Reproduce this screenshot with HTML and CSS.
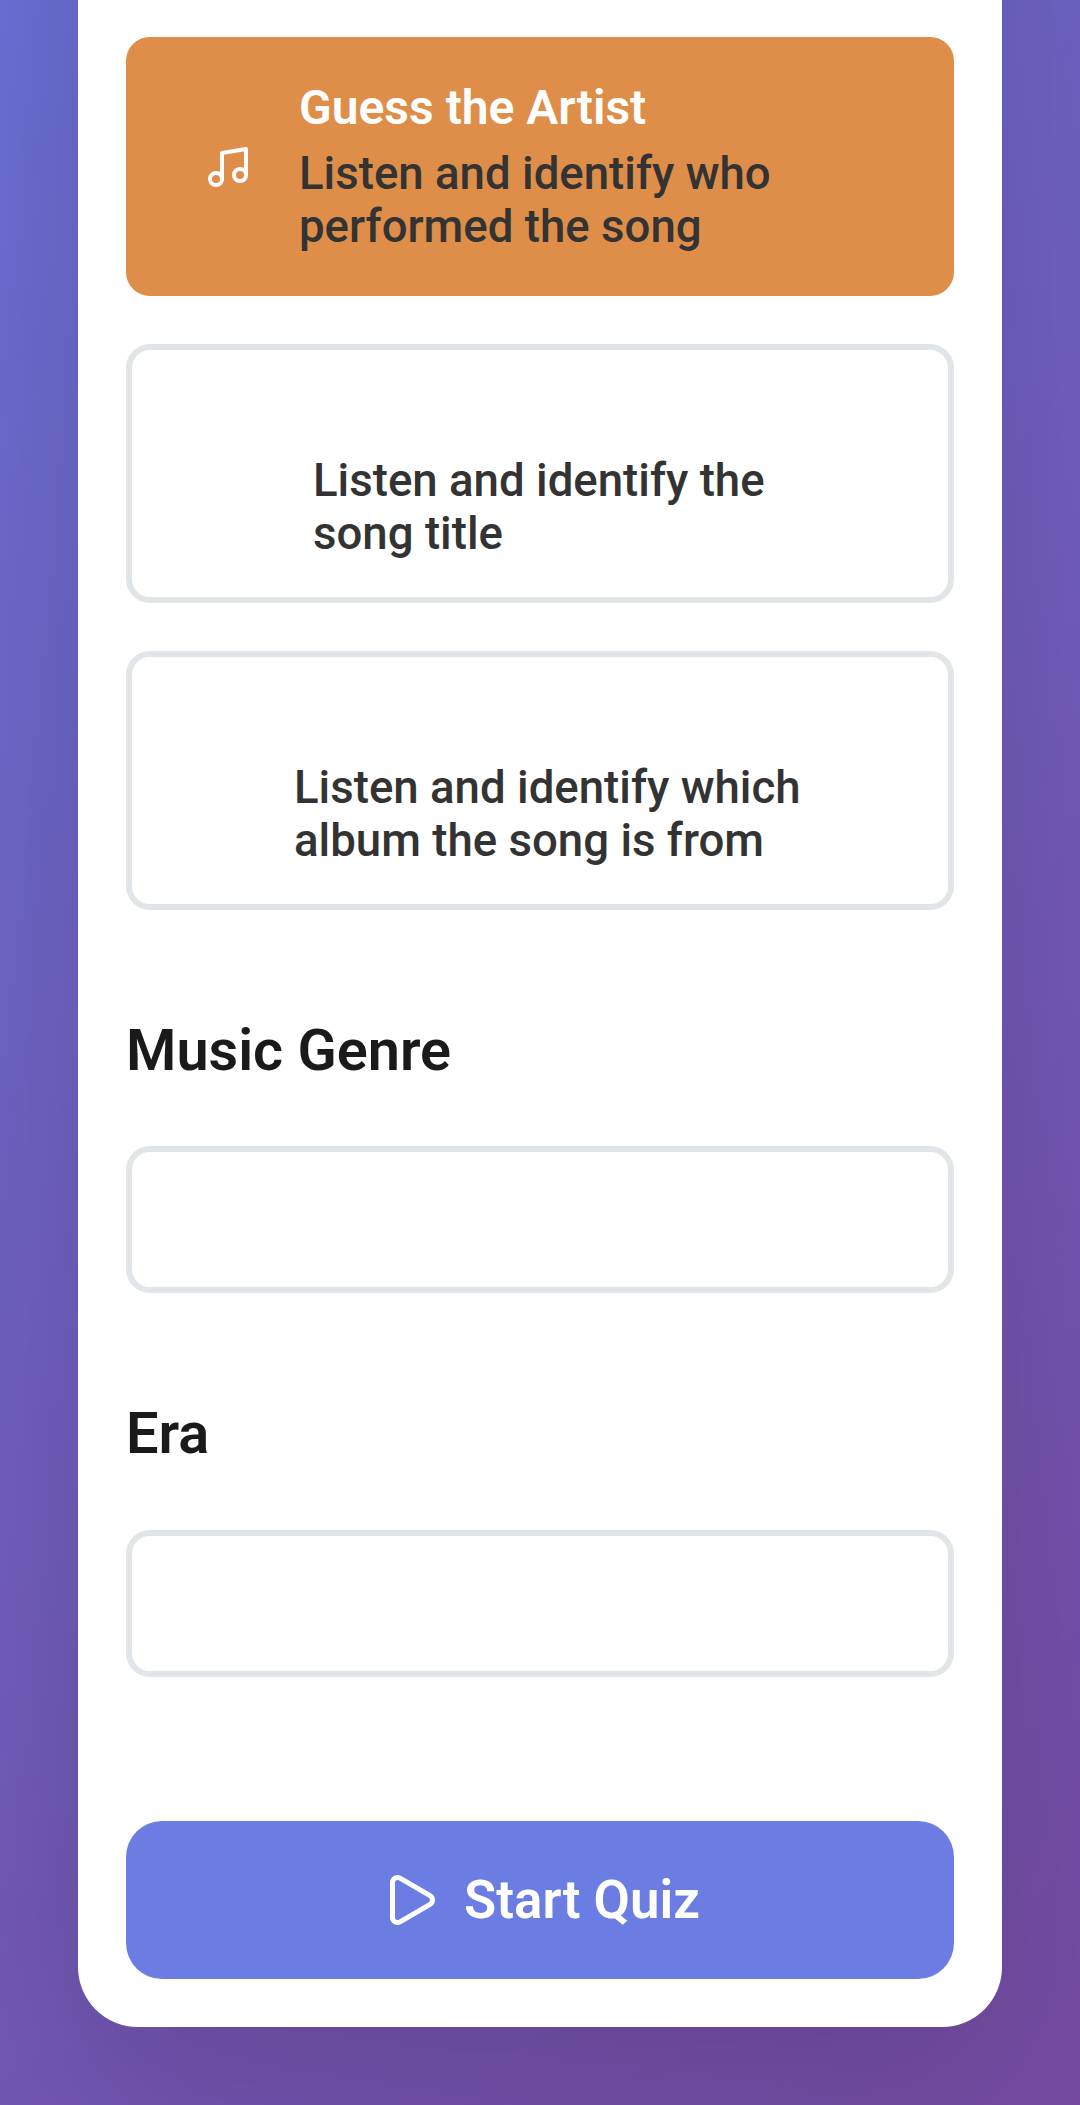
FILE: index.html
```html
<!DOCTYPE html>
<html lang="en">
<head>
<meta charset="utf-8">
<title>Music Quiz</title>
<link rel="stylesheet" href="styles.css">
</head>
<body>
<main class="card">
  <section class="modes">
    <button class="option option-active">
      <svg class="icon-music" viewBox="0 0 24 24"><path d="M9 18V5l12-2v13"/><circle cx="6" cy="18" r="3"/><circle cx="18" cy="16" r="3"/></svg>
      <span class="option-text">
        <span class="option-title">Guess the Artist</span>
        <span class="option-desc">Listen and identify who<br>performed the song</span>
      </span>
    </button>
    <button class="option option-song">
      <span class="option-desc">Listen and identify the<br>song title</span>
    </button>
    <button class="option option-album">
      <span class="option-desc">Listen and identify which<br>album the song is from</span>
    </button>
  </section>
  <section class="group">
    <h2 class="group-title">Music Genre</h2>
    <button class="select" aria-label="Music Genre"></button>
  </section>
  <section class="group">
    <h2 class="group-title">Era</h2>
    <button class="select" aria-label="Era"></button>
  </section>
  <button class="start">
    <svg class="icon-play" viewBox="0 0 24 24"><path d="M5 5a2 2 0 0 1 3.008-1.728l11.997 6.998a2 2 0 0 1 .003 3.458l-12 7A2 2 0 0 1 5 19z"/></svg>
    <span>Start Quiz</span>
  </button>
</main>
</body>
</html>
```
FILE: styles.css
```css
* { box-sizing: border-box; }
body {
  display: flow-root;
  margin: 0;
  height: 2105px;
  padding: 0 78px;
  overflow: hidden;
  font-family: Roboto, sans-serif;
  background: linear-gradient(135deg, #667eea 0%, #764ba2 100%) 0 100% / 100% 3400px no-repeat;
}
button {
  font: inherit;
  text-align: left;
  margin: 0;
  padding: 0;
}
svg {
  flex: none;
  fill: none;
  stroke: #fff;
  stroke-width: 2;
  stroke-linecap: round;
  stroke-linejoin: round;
}
/* The card starts above the visible part of the page. */
.card {
  height: 2927px;
  margin-top: -900px;
  padding: 937px 48px 48px;
  background: #fff;
  border-radius: 60px;
  box-shadow: 0 60px 180px rgba(0, 0, 0, 0.15);
}
.modes {
  display: flex;
  flex-direction: column;
  gap: 48px;
}
.option {
  display: flex;
  height: 259px;
  border: 6px solid #e1e5e8;
  border-radius: 24px;
  background: #fff;
}
.option-active {
  align-items: center;
  gap: 47px;
  padding-left: 72px;
  border-color: #de8e49;
  background: #de8e49;
}
.option-song,
.option-album {
  align-items: flex-end;
  padding-bottom: 37px;
}
.option-song { padding-left: 181px; }
.option-album { padding-left: 162px; }
.icon-music { width: 48px; height: 48px; }
.option-text {
  display: flex;
  flex-direction: column;
  gap: 11px;
}
.option-title {
  font-size: 48px;
  line-height: 56px;
  font-weight: 600;
  color: #fff;
}
.option-desc {
  font-size: 45.6px;
  line-height: 53px;
  font-weight: 500;
  color: #333;
}
.group-title {
  margin: 0 0 61px;
  font-size: 57.6px;
  line-height: 68px;
  font-weight: 600;
  color: #1a1a1a;
}
.group { padding-top: 107px; }
.group + .group .group-title { margin-bottom: 62px; }
.select {
  display: block;
  width: 100%;
  height: 147px;
  border: 6px solid #e1e5e8;
  border-radius: 24px;
  background: #fff;
}
.start {
  display: flex;
  align-items: center;
  justify-content: center;
  gap: 24px;
  width: 100%;
  height: 158px;
  margin-top: 144px;
  border: 0;
  border-radius: 36px;
  background: #6b7de2;
  color: #fff;
  font-size: 52.8px;
  font-weight: 600;
}
.icon-play { width: 60px; height: 60px; }
```
